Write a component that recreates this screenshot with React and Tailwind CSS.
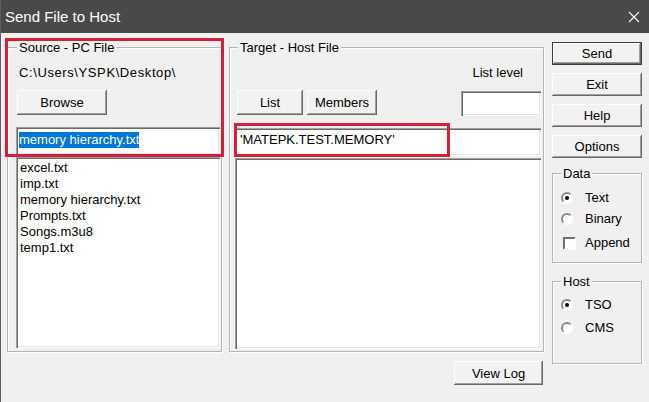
import { clsx } from 'clsx';
import { twMerge } from 'tailwind-merge';

function cn(...inputs) {
  return twMerge(clsx(inputs));
}

const raised =
  "shadow-[inset_-1px_-1px_0_#696969,inset_1px_1px_0_#ffffff,inset_-2px_-2px_0_#a0a0a0]";
const sunken =
  "shadow-[inset_1px_1px_0_#a0a0a0,inset_2px_2px_0_#696969,inset_-1px_-1px_0_#ffffff,inset_-2px_-2px_0_#e3e3e3]";

function Btn({ children, className }) {
  return (
    <button
      className={cn(
        "flex items-center justify-center bg-[#f2f2f2] text-[13px] leading-none text-black",
        raised,
        className
      )}
    >
      {children}
    </button>
  );
}

function Group({ title, className, legendClass, children }) {
  return (
    <fieldset
      className={cn(
        "border border-[#b5b5b5] shadow-[inset_1px_1px_0_#ffffff,1px_1px_0_#ffffff]",
        className
      )}
    >
      <legend className={cn("ml-[8px] px-[2px] leading-[15px] bg-[#f0f0f0]", legendClass)}>
        {title}
      </legend>
      {children}
    </fieldset>
  );
}

function Radio({ checked, label, className }) {
  return (
    <div className={cn("flex items-center h-[20px] pl-[8px]", className)}>
      <span className="relative w-[12px] h-[12px] rounded-full bg-white border-2 border-t-[#8a8a8a] border-l-[#8a8a8a] border-r-white border-b-white flex items-center justify-center">
        {checked && <span className="w-[4px] h-[4px] rounded-full bg-black" />}
      </span>
      <span className="ml-[12px]">{label}</span>
    </div>
  );
}

function Check({ label, className }) {
  return (
    <div className={cn("flex items-center h-[20px] pl-[10px]", className)}>
      <span className="w-[13px] h-[13px] bg-white border-2 border-t-[#6f6f6f] border-l-[#6f6f6f] border-r-white border-b-white" />
      <span className="ml-[9px]">{label}</span>
    </div>
  );
}

const files = [
  "excel.txt",
  "imp.txt",
  "memory hierarchy.txt",
  "Prompts.txt",
  "Songs.m3u8",
  "temp1.txt",
];

export default function App() {
  return (
    <div className="relative w-[649px] h-[402px] overflow-hidden bg-[#f0f0f0] border-l border-[#5e5e5e] font-['Liberation_Sans',Arial,sans-serif] text-[13px] text-black">
      {/* title bar */}
      <div className="h-[33px] bg-[#494949] flex items-center justify-between pl-[4px] pr-[10px]">
        <span className="text-white text-[15px] leading-none">Send File to Host</span>
        <svg width="12" height="12" viewBox="0 0 12 12" className="-mr-[1px]">
          <path d="M1 1 L11 11 M11 1 L1 11" stroke="#ffffff" strokeWidth="1.1" fill="none" />
        </svg>
      </div>

      {/* body */}
      <div className="flex items-start pl-[6px] pt-[7px]">
        <div className="flex flex-col">
          <div className="flex">
            {/* source */}
            <Group title="Source - PC File" className="w-[215px] h-[312px]" legendClass="ml-[9px]">
              <div className="mt-[10px] ml-[11px] leading-[16px] tracking-[0.6px]">C:\Users\YSPK\Desktop\</div>
              <Btn className="mt-[9px] ml-[9px] w-[90px] h-[25px]">Browse</Btn>
              <div className={cn("mt-[12px] ml-[8px] w-[204px] h-[28px] bg-white pl-[3px] pt-[3px]", sunken)}>
                <span className="bg-[#0078d7] text-white leading-[16px] inline-block">memory hierarchy.txt</span>
              </div>
              <div className={cn("mt-[2px] ml-[8px] w-[204px] h-[191px] bg-white pl-[4px] pt-[3px]", sunken)}>
                {files.map((f) => (
                  <div key={f} className="leading-[16px]">{f}</div>
                ))}
              </div>
            </Group>

            {/* target */}
            <Group title="Target - Host File" className="ml-[7px] w-[315px] h-[312px]" legendClass="ml-[8px]">
              <div className="mt-[10px] mr-[20px] text-right leading-[16px]">List level</div>
              <div className="flex items-start mt-[9px]">
                <Btn className="ml-[7px] w-[66px] h-[25px]">List</Btn>
                <Btn className="ml-[4px] w-[70px] h-[25px]">Members</Btn>
                <div className={cn("ml-auto mr-[2px] mt-[1px] w-[80px] h-[25px] bg-white", sunken)} />
              </div>
              <div className={cn("mt-[12px] ml-[5px] w-[306px] h-[28px] bg-white pl-[5px] pt-[4px] leading-[16px]", sunken)}>
                'MATEPK.TEST.MEMORY'
              </div>
              <div className={cn("mt-[2px] ml-[5px] w-[306px] h-[191px] bg-white", sunken)} />
            </Group>
          </div>
          <Btn className="self-end mt-[9px] mr-[1px] w-[89px] h-[24px]">View Log</Btn>
        </div>

        {/* right column */}
        <div className="ml-[8px] w-[90px] flex flex-col">
          <Btn className="mt-[2px] h-[23px] border border-[#3c3c3c]">Send</Btn>
          <Btn className="mt-[8px] h-[23px]">Exit</Btn>
          <Btn className="mt-[8px] h-[23px]">Help</Btn>
          <Btn className="mt-[8px] h-[23px]">Options</Btn>
          <Group title="Data" className="mt-[8px] h-[97px]">
            <Radio checked label="Text" className="mt-[7px]" />
            <Radio label="Binary" className="mt-[1px]" />
            <Check label="Append" className="mt-[4px]" />
          </Group>
          <Group title="Host" className="mt-[11px] h-[90px]">
            <Radio checked label="TSO" className="mt-[6px]" />
            <Radio label="CMS" className="mt-[3px]" />
          </Group>
        </div>
      </div>

      {/* red annotation boxes */}
      <div className="absolute left-[4px] top-[38px] w-[219px] h-[119px] border-[3px] border-[#d6203a] pointer-events-none" />
      <div className="absolute left-[233px] top-[123px] w-[216px] h-[34px] border-[3px] border-[#d6203a] pointer-events-none" />
    </div>
  );
}
